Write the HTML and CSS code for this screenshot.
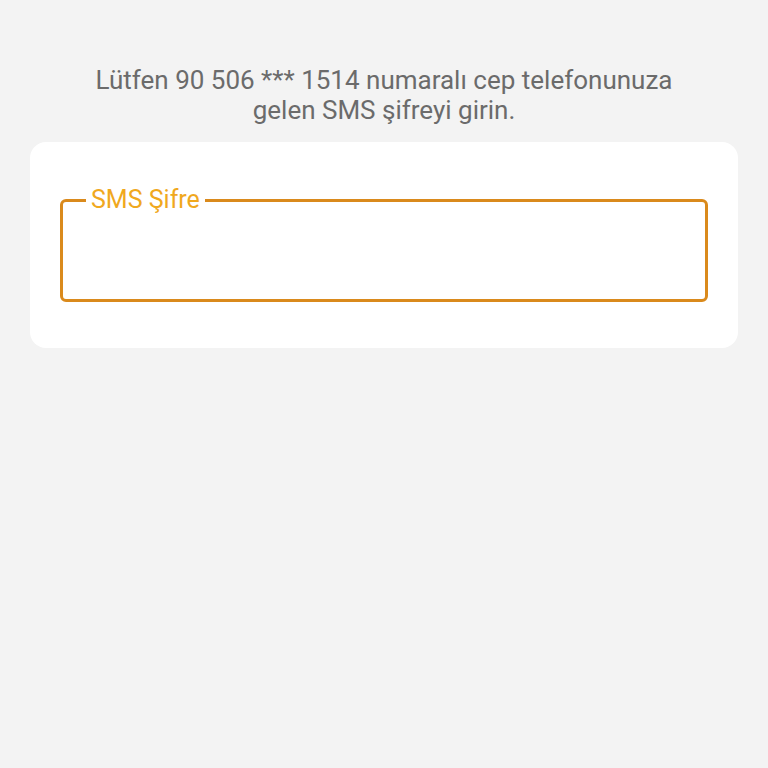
FILE: index.html
```html
<!DOCTYPE html>
<html lang="tr">
<head>
	<meta charset="UTF-8">
	<title>SMS Şifre</title>
	<meta name="viewport" content="width=device-width, initial-scale=1">
	<link rel="stylesheet" href="styles.css">
</head>
<body>
	<div class="page">
		<p class="info">Lütfen 90 506 *** 1514 numaralı cep telefonunuza<br>gelen SMS şifreyi girin.</p>
		<div class="card">
			<fieldset class="field">
				<legend class="field_label">SMS Şifre</legend>
				<input type="text" class="field_input" inputmode="numeric">
			</fieldset>
		</div>
	</div>
</body>
</html>
```

FILE: styles.css
```css
html {
	font-size: 100%;
	font-family: Roboto, "Liberation Sans", sans-serif;
}
body {
	margin: 0;
	padding: 0;
	background: #f3f3f3;
	min-height: 100vh;
}
.page {
	padding: 65px 30px 0;
	display: flex;
	flex-flow: column nowrap;
}
.info {
	margin: 0;
	text-align: center;
	font-size: 26px;
	line-height: 30px;
	color: #6b6b6b;
}
.card {
	margin-top: 17px;
	background: #fff;
	border-radius: 16px;
	padding: 44px 30px 46px;
}
.field {
	margin: 0;
	padding: 0 16px;
	border: 3px solid #da8a1c;
	border-radius: 6px;
	min-width: 0;
}
.field_label {
	padding: 0 5px;
	margin-left: 7px;
	font-size: 25px;
	line-height: 28px;
	color: #f0a81e;
}
.field_input {
	display: block;
	width: 100%;
	box-sizing: border-box;
	height: 85px;
	border: 0;
	outline: 0;
	background: transparent;
	font-family: inherit;
	font-size: 24px;
	color: #333;
}
```
